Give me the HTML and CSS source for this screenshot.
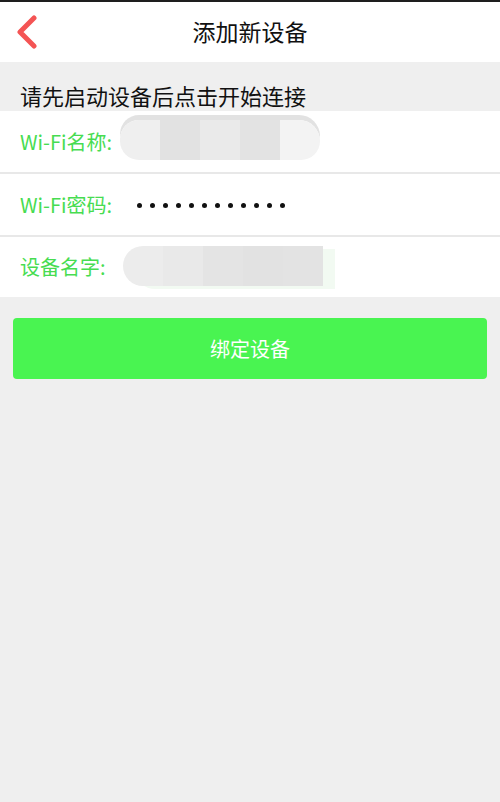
FILE: index.html
```html
<!DOCTYPE html>
<html lang="zh">
<head>
<meta charset="utf-8">
<link rel="stylesheet" href="styles.css">
</head>
<body>
<div class="page">
  <header class="topbar">
    <svg class="back" width="24" height="34" viewBox="0 0 24 34">
      <polyline points="19,3 5,17 19,31" fill="none" stroke="#f45454" stroke-width="5" stroke-linecap="round" stroke-linejoin="round"/>
    </svg>
    <div class="title">添加新设备</div>
  </header>
  <div class="hint">请先启动设备后点击开始连接</div>
  <div class="form">
    <div class="row">
      <span class="label">Wi-Fi名称:</span>
      <div class="blob blob1">
        <i class="s1"></i><i class="s2"></i><i class="s3"></i><i class="s4"></i><i class="s5"></i>
      </div>
    </div>
    <div class="row">
      <span class="label">Wi-Fi密码:</span>
      <div class="dots">
        <i></i><i></i><i></i><i></i><i></i><i></i><i></i><i></i><i></i><i></i><i></i><i></i>
      </div>
    </div>
    <div class="row">
      <span class="label">设备名字:</span>
      <div class="blob blob3">
        <i class="s1"></i><i class="s2"></i><i class="s3"></i><i class="s4"></i><i class="s5"></i>
      </div>
    </div>
  </div>
  <div class="btnwrap">
    <button class="bind">绑定设备</button>
  </div>
</div>
</body>
</html>
```
FILE: styles.css
```css
* { box-sizing: border-box; margin: 0; padding: 0; }
html, body { width: 500px; height: 802px; }
body {
  background: #efefef;
  font-family: "Noto Sans CJK SC", "Noto Sans", sans-serif;
  overflow: hidden;
}
.page { height: 802px; border-top: 2px solid #1e1e1e; }
.topbar {
  height: 60px;
  background: #fff;
  display: flex;
  align-items: center;
  justify-content: center;
  position: relative;
}
.back { position: absolute; left: 15px; top: 13px; }
.title { font-size: 23px; color: #111; line-height: 1; margin-top: -2px; }
.hint {
  height: 49px;
  padding: 21px 0 0 20px;
  font-size: 22px;
  line-height: 24px;
  color: #111;
}
.form { background: #fff; }
.row {
  height: 63px;
  display: flex;
  align-items: center;
  padding-left: 20px;
  border-bottom: 2px solid #e8e8e8;
}
.row:last-child { height: 60px; border-bottom: none; }
.label { flex: none; width: 100px; font-size: 20px; color: #47dc51; line-height: 1; white-space: nowrap; }
.blob { display: flex; height: 40px; border-radius: 20px; overflow: hidden; }
.blob i { display: block; width: 40px; height: 100%; }
.blob1 { margin-top: -4px; box-shadow: 0 -5px 0 #e2e2e2; border-radius: 20px 22px 20px 20px; }
.blob1 .s1 { background: #efefef; }
.blob1 .s2 { background: #e2e2e2; }
.blob1 .s3 { background: #eaeaea; }
.blob1 .s4 { background: #e3e3e3; }
.blob1 .s5 { background: #f3f3f3; }
.blob3 { margin-left: 3px; margin-top: -2px; border-radius: 20px 0 0 20px; box-shadow: 12px 3px 0 #f2faf2; }
.blob3 .s1 { background: #ececec; }
.blob3 .s2 { background: #e9e9e9; }
.blob3 .s3 { background: #e4e4e4; }
.blob3 .s4 { background: #e2e2e2; }
.blob3 .s5 { background: #e3e3e3; }
.dots { display: flex; gap: 8px; margin-left: 17px; margin-top: 2px; }
.dots i { display: block; width: 5px; height: 5px; border-radius: 50%; background: #111; }
.btnwrap { padding: 21px 13px 0; }
.bind {
  width: 474px;
  height: 61px;
  border: none;
  border-radius: 4px;
  background: #49f451;
  color: #fff;
  font-family: "Noto Sans CJK SC", sans-serif;
  font-size: 20px;
}
```
